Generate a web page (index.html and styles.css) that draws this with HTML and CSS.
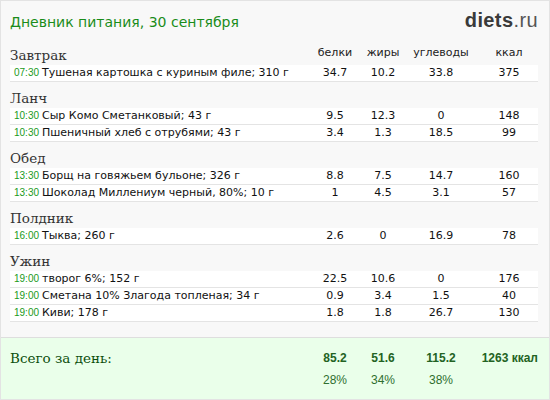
FILE: index.html
```html
<!DOCTYPE html>
<html lang="ru">
<head>
<meta charset="utf-8">
<title>Дневник питания</title>
<link rel="stylesheet" href="styles.css">
</head>
<body>
<div class="page">
  <header class="top">
    <h1 class="title">Дневник питания, 30 сентября</h1>
    <div class="logo"><b>diets</b>.ru</div>
  </header>
  <main class="meals">
    <section class="meal">
      <div class="meal-head">
        <h2>Завтрак</h2>
        <span class="lbl">белки</span><span class="lbl">жиры</span><span class="lbl">углеводы</span><span class="lbl kcal">ккал</span>
      </div>
      <div class="row"><div class="food"><span class="time">07:30</span>Тушеная картошка с куриным филе; 310 г</div><span>34.7</span><span>10.2</span><span>33.8</span><span class="kcal">375</span></div>
    </section>
    <section class="meal">
      <div class="meal-head"><h2>Ланч</h2></div>
      <div class="row"><div class="food"><span class="time">10:30</span>Сыр Комо Сметанковый; 43 г</div><span>9.5</span><span>12.3</span><span>0</span><span class="kcal">148</span></div>
      <div class="row"><div class="food"><span class="time">10:30</span>Пшеничный хлеб с отрубями; 43 г</div><span>3.4</span><span>1.3</span><span>18.5</span><span class="kcal">99</span></div>
    </section>
    <section class="meal">
      <div class="meal-head"><h2>Обед</h2></div>
      <div class="row"><div class="food"><span class="time">13:30</span>Борщ на говяжьем бульоне; 326 г</div><span>8.8</span><span>7.5</span><span>14.7</span><span class="kcal">160</span></div>
      <div class="row"><div class="food"><span class="time">13:30</span>Шоколад Миллениум черный, 80%; 10 г</div><span>1</span><span>4.5</span><span>3.1</span><span class="kcal">57</span></div>
    </section>
    <section class="meal">
      <div class="meal-head"><h2>Полдник</h2></div>
      <div class="row"><div class="food"><span class="time">16:00</span>Тыква; 260 г</div><span>2.6</span><span>0</span><span>16.9</span><span class="kcal">78</span></div>
    </section>
    <section class="meal">
      <div class="meal-head"><h2>Ужин</h2></div>
      <div class="row"><div class="food"><span class="time">19:00</span>творог 6%; 152 г</div><span>22.5</span><span>10.6</span><span>0</span><span class="kcal">176</span></div>
      <div class="row"><div class="food"><span class="time">19:00</span>Сметана 10% Злагода топленая; 34 г</div><span>0.9</span><span>3.4</span><span>1.5</span><span class="kcal">40</span></div>
      <div class="row"><div class="food"><span class="time">19:00</span>Киви; 178 г</div><span>1.8</span><span>1.8</span><span>26.7</span><span class="kcal">130</span></div>
    </section>
  </main>
  <footer class="totals">
    <div class="total-label">Всего за день:</div>
    <b class="sum">85.2</b><b class="sum">51.6</b><b class="sum">115.2</b><b class="sum sum-kcal">1263 ккал</b>
    <span class="pct">28%</span><span class="pct">34%</span><span class="pct">38%</span>
  </footer>
</div>
</body>
</html>
```
FILE: styles.css
```css
html, body {
  margin: 0;
  padding: 0;
  background: #ffffff;
}

.page {
  width: 550px;
  height: 400px;
  box-sizing: border-box;
  border: 1px solid #e3e3e3;
  background: #f8f8f8;
  display: flex;
  flex-direction: column;
  font-family: "DejaVu Sans", Verdana, sans-serif;
  color: #111;
}

.top {
  display: flex;
  justify-content: space-between;
  align-items: baseline;
  height: 38px;
  box-sizing: border-box;
  padding: 8px 11px 0 9px;
}

.title {
  margin: 0;
  font-family: "DejaVu Sans", Verdana, sans-serif;
  font-weight: normal;
  font-size: 14px;
  line-height: 18px;
  color: #1a8c1a;
}

.logo {
  font-family: "Liberation Sans", Arial, sans-serif;
  font-size: 20px;
  line-height: 22px;
  letter-spacing: 0.4px;
  color: #555;
}

.logo b {
  color: #3a3a3a;
}

.meals {
  padding: 0 11px 15px 9px;
}

.meal-head,
.row,
.totals {
  display: grid;
  grid-template-columns: 1fr 48px 48px 68px 63px;
}

.meal-head {
  height: 26px;
  align-items: end;
}

.meal-head h2 {
  margin: 0;
  padding-bottom: 1px;
  font-family: "DejaVu Serif", Georgia, serif;
  font-weight: normal;
  font-size: 13.5px;
  line-height: 18px;
  color: #333;
}

.lbl {
  font-size: 11px;
  line-height: 14px;
  padding-bottom: 5px;
  text-align: center;
  color: #222;
}

.kcal {
  padding-left: 5px;
}

.row {
  height: 16px;
  line-height: 16px;
  background: #fff;
  border-bottom: 1px solid #e4e4e4;
  font-size: 11px;
  color: #111;
}

.row > span {
  text-align: center;
}

.food {
  padding-left: 4px;
  white-space: nowrap;
  overflow: hidden;
}

.time {
  display: inline-block;
  width: 28px;
  font-family: "Liberation Sans", Arial, sans-serif;
  font-size: 10px;
  color: #1a9a1a;
}

.totals {
  flex: 1;
  border-top: 1px solid #dedede;
  background: #eaffea;
  padding: 10px 11px 0 9px;
  grid-template-rows: 20px 18px;
  row-gap: 3px;
  align-content: start;
  font-family: "Liberation Sans", Arial, sans-serif;
  font-size: 12px;
}

.total-label {
  grid-row: 1;
  grid-column: 1;
  font-family: "DejaVu Serif", Georgia, serif;
  font-size: 13.5px;
  line-height: 20px;
  color: #0d4f0d;
}

.sum {
  grid-row: 1;
  line-height: 20px;
  text-align: center;
  color: #236323;
}

.sum-kcal {
  text-align: right;
}

.pct {
  grid-row: 2;
  line-height: 18px;
  text-align: center;
  color: #2f6f2f;
}

.pct:nth-of-type(1) { grid-column: 2; }
.pct:nth-of-type(2) { grid-column: 3; }
.pct:nth-of-type(3) { grid-column: 4; }
.sum:nth-of-type(1) { grid-column: 2; }
.sum:nth-of-type(2) { grid-column: 3; }
.sum:nth-of-type(3) { grid-column: 4; }
.sum:nth-of-type(4) { grid-column: 5; }
```
